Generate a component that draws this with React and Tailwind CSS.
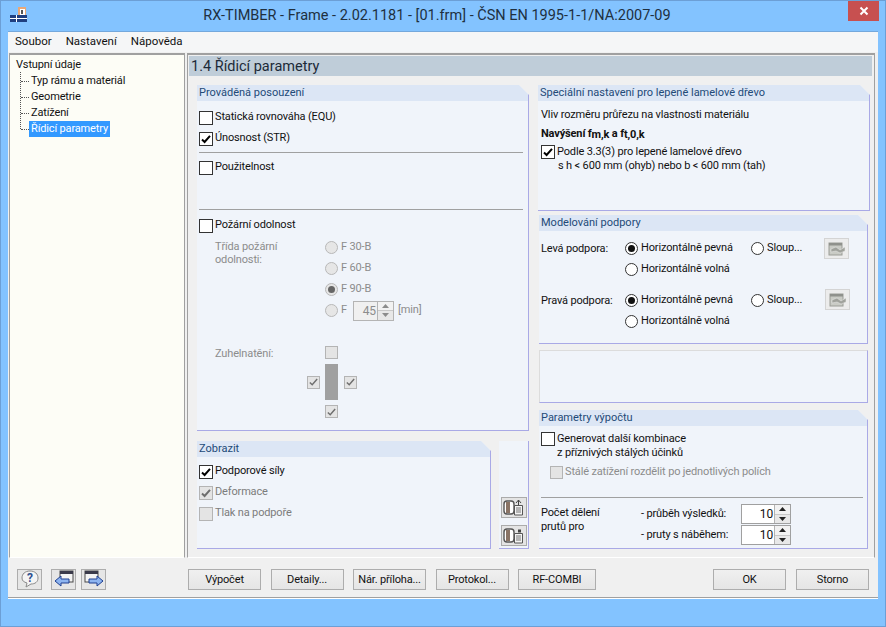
import React from 'react';

function Check({ checked, disabled, small }) {
  const size = small ? 'w-[13px] h-[13px]' : 'w-[14px] h-[14px]';
  const tone = disabled ? 'border-[#b4b4b4] bg-[#e4e4e4]' : 'border-[#333333] bg-white';
  return (
    <span className={`${size} ${tone} shrink-0 border flex items-center justify-center`}>
      {checked && (
        <svg width="12" height="12" viewBox="0 0 12 12">
          <path
            d="M2 6.5 L4.6 9 L10 2.8"
            fill="none"
            stroke={disabled ? '#6f6f6f' : '#000000'}
            strokeWidth={small ? 1.6 : 2}
          />
        </svg>
      )}
    </span>
  );
}

function Radio({ selected, disabled }) {
  const tone = disabled ? 'border-[#b8b8b8] bg-[#e6e6e6]' : 'border-[#333333] bg-white';
  return (
    <span className={`w-[13px] h-[13px] shrink-0 rounded-full border ${tone} flex items-center justify-center`}>
      {selected && (
        <span className={`w-[7px] h-[7px] rounded-full ${disabled ? 'bg-[#666666]' : 'bg-[#111111]'}`}></span>
      )}
    </span>
  );
}

function Group({ title, className, titleClass = '', children }) {
  return (
    <div className={`${className} flex flex-col bg-[#f0f4fa] border-r border-b border-[#a9a9e6] [clip-path:polygon(0_0,calc(100%-10px)_0,100%_10px,100%_100%,0_100%)]`}>
      <div className={`h-[16px] shrink-0 bg-[#dce6f5] pl-[2px] text-[11px] leading-[16px] tracking-normal text-[#234a78] ${titleClass}`}>{title}</div>
      {children}
    </div>
  );
}

function CheckRow({ label, checked, disabled }) {
  return (
    <div className="h-[21px] flex items-center gap-[2px]">
      <Check checked={checked} disabled={disabled} />
      <span className={disabled ? 'text-[#7c7c7c]' : ''}>{label}</span>
    </div>
  );
}

function RadioRow({ label, selected, disabled, className = '' }) {
  return (
    <div className={`h-[21px] flex items-center gap-[3px] ${className}`}>
      <Radio selected={selected} disabled={disabled} />
      <span className={disabled ? 'text-[#8c8c8c]' : ''}>{label}</span>
    </div>
  );
}

function Spinner({ value, disabled, className = '' }) {
  return (
    <div className={`${className} flex border ${disabled ? 'border-[#b4b4b4] bg-[#f0f0f0] text-[#8c8c8c]' : 'border-[#a0a0a0] bg-white'}`}>
      <span className="flex-1 text-right pr-[1px] leading-[18px] text-[12px]">{value}</span>
      <span className="w-[16px] flex flex-col border-l border-[#b4b4b4]">
        <span className="flex-1 flex items-center justify-center border-b border-[#c8c8c8] bg-[#f2f2f2]">
          <svg width="7" height="4" viewBox="0 0 7 4"><path d="M3.5 0 L7 4 L0 4 Z" fill={disabled ? '#8c8c8c' : '#222222'} /></svg>
        </span>
        <span className="flex-1 flex items-center justify-center bg-[#e8e8e8]">
          <svg width="7" height="4" viewBox="0 0 7 4"><path d="M0 0 L7 0 L3.5 4 Z" fill={disabled ? '#8c8c8c' : '#222222'} /></svg>
        </span>
      </span>
    </div>
  );
}

// greyed-out support editor button
function SupportButton({ className = '' }) {
  return (
    <span className={`${className} w-[25px] h-[21px] border border-[#d4d4d4] bg-[#ececec] flex items-center justify-center`}>
      <svg width="18" height="14" viewBox="0 0 18 14">
        <rect x="1" y="1" width="13" height="12" fill="#c9cbc5" stroke="#9a9c96" />
        <rect x="1" y="1" width="13" height="2.5" fill="#8f918c" />
        <path d="M3 7 L8 5 L12 8 L17 5 L17 9 L12 11 L8 9 L3 10 Z" fill="#a0a29c" stroke="#e8e8e8" strokeWidth="0.5" />
      </svg>
    </span>
  );
}

// copy / paste settings buttons next to the display group
function ClipboardButton({ star }) {
  return (
    <span className="w-[26px] h-[21px] border border-[#ababab] bg-[#e4e4e4] flex items-center justify-center">
      <svg width="22" height="17" viewBox="0 0 22 17">
        <rect x="1" y="2" width="10" height="13" rx="3" fill="#ffffff" stroke="#555555" strokeWidth="1.4" />
        <rect x="3" y="3" width="4" height="11" fill="#8a7466" />
        <path d="M11.5 6.5 H19.5 V16 H11.5 Z" fill="#f4f4f4" stroke="#555555" />
        <path d="M13 9 H18 M13 11 H18 M13 13 H18" stroke="#777777" />
        {star
          ? <rect x="15" y="2.5" width="3" height="3" fill="#444444" />
          : <path d="M13 4 L15.5 1 L18 4 M15.5 1 V6" fill="none" stroke="#444444" />}
      </svg>
    </span>
  );
}

function ToolButton({ children }) {
  return (
    <span className="w-[25px] h-[21px] border border-[#adadad] bg-[#e6e6e6] flex items-center justify-center">
      {children}
    </span>
  );
}

function ActionButton({ label, className = 'w-[73px]' }) {
  return (
    <button className={`${className} h-[21px] border border-[#adadad] bg-gradient-to-b from-[#f0f0f0] to-[#e5e5e5] text-center leading-[19px] whitespace-nowrap`}>
      {label}
    </button>
  );
}

function WindowArrow({ flip }) {
  return (
    <svg width="20" height="18" viewBox="0 0 20 18" className={flip ? '-scale-x-100' : ''}>
      <rect x="6" y="1" width="13" height="11" fill="#f4f4f4" stroke="#4a4a4a" />
      <rect x="6" y="1" width="13" height="3" fill="#3a3a4a" />
      <path d="M1 11 L7 6 V9 H15 V13 H7 V16 Z" fill="#8db4f0" stroke="#1f3f90" />
    </svg>
  );
}

const treeItems = ['Typ rámu a materiál', 'Geometrie', 'Zatížení', 'Řídicí parametry'];

export default function App() {
  return (
    <div className="w-[886px] h-[627px] flex flex-col overflow-hidden bg-[#83c3ff] border border-[#6c9fd6] font-['Roboto',Arial,sans-serif] text-[11px] tracking-[-0.15px] text-[#111111]">
      {/* title bar */}
      <div className="h-[30px] shrink-0 relative flex items-center justify-center pr-[12px] text-[14.5px] tracking-normal text-[#20303f]">
        <svg width="18" height="16" viewBox="0 0 18 16" className="absolute left-[9px] top-[6px]">
          <rect x="8" y="0" width="8" height="9" fill="#e8a878" />
          <rect x="10" y="2" width="5" height="6" fill="#ffffff" />
          <rect x="11" y="3" width="2" height="4" fill="#555555" />
          <rect x="0" y="8" width="17" height="7" fill="#1f3f80" />
          <rect x="0" y="11" width="17" height="1" fill="#ffffff" />
          <rect x="6" y="8" width="1" height="7" fill="#ffffff" />
        </svg>
        <span>RX-TIMBER - Frame - 2.02.1181 - [01.frm] - ČSN EN 1995-1-1/NA:2007-09</span>
        <span className="absolute right-[6px] top-0 w-[31px] h-[20px] bg-[#c75050] flex items-center justify-center">
          <svg width="10" height="10" viewBox="0 0 10 10">
            <path d="M1.5 1.5 L8.5 8.5 M8.5 1.5 L1.5 8.5" stroke="#ffffff" strokeWidth="2" />
          </svg>
        </span>
      </div>

      <div className="mx-[7px] h-[566px] shrink-0 flex flex-col bg-[#f0f0f0] border-t border-[#74a8dc]">
        {/* menu */}
        <div className="h-[20px] shrink-0 bg-[#f5f6f7] flex items-center gap-[14px] pl-[7px] text-[11.5px] tracking-normal">
          <span>Soubor</span>
          <span>Nastavení</span>
          <span>Nápověda</span>
        </div>

        <div className="h-[505px] shrink-0 mt-[1px] flex gap-[2px] pl-[1px]">
          {/* navigation tree */}
          <div className="w-[176px] bg-[#fdfdf6] border-t-2 border-l border-r border-b border-t-[#a0a0a0] border-l-[#a0a0a0] border-r-[#a0a0a0] border-b-white pl-[6px] pt-[2px]">
            <div className="h-[16px] leading-[16px]">Vstupní údaje</div>
            <div className="relative">
              <span className="absolute left-[4px] -top-[1px] bottom-[8px] border-l border-dotted border-[#555555]"></span>
              {treeItems.map((item) => (
                <div key={item} className="h-[16px] flex items-center pl-[5px]">
                  <span className="w-[8px] border-t border-dotted border-[#555555]"></span>
                  <span className={`leading-[16px] px-[2px] ${item === 'Řídicí parametry' ? 'bg-[#3399ff] text-white' : ''}`}>{item}</span>
                </div>
              ))}
            </div>
          </div>

          {/* main panel */}
          <div className="w-[688px] border-t-2 border-l border-r border-b border-t-[#a0a0a0] border-l-[#a0a0a0] border-r-[#a0a0a0] border-b-white pt-[1px] pl-[1px]">
            <div className="w-[683px] h-[20px] bg-[#bfcdd9] pl-[2px] text-[14.5px] tracking-normal leading-[22px] text-[#1c2a38]">1.4 Řídicí parametry</div>

            <div className="mt-[9px] ml-[8px] flex gap-[9px]">
              {/* left column */}
              <div className="w-[332px] flex flex-col">
                <Group title="Prováděná posouzení" titleClass="tracking-[0.5px]" className="h-[346px]">
                  <div className="pl-[2px] pt-[6px]">
                    <CheckRow label="Statická rovnováha (EQU)" />
                    <CheckRow label="Únosnost (STR)" checked />
                    <div className="mt-[3px] mr-[5px] border-t border-[#a0a0a0]"></div>
                    <div className="mt-[4px]"><CheckRow label="Použitelnost" /></div>
                    <div className="mt-[31px] mr-[5px] border-t border-[#a0a0a0]"></div>
                    <div className="mt-[5px]"><CheckRow label="Požární odolnost" /></div>

                    <div className="mt-[1px] flex text-[#8c8c8c]">
                      <div className="w-[126px] pl-[16px] pt-[3px] leading-[13px]">Třída požární<br />odolnosti:</div>
                      <div>
                        <RadioRow label="F 30-B" disabled />
                        <RadioRow label="F 60-B" disabled />
                        <RadioRow label="F 90-B" selected disabled />
                        <div className="flex items-center">
                          <RadioRow label="F" disabled />
                          <Spinner value="45" disabled className="ml-[6px] w-[41px] h-[20px]" />
                          <span className="ml-[4px]">[min]</span>
                        </div>
                      </div>
                    </div>

                    <div className="mt-[25px] flex text-[#8c8c8c]">
                      <div className="w-[108px] pl-[16px]">Zuhelnatění:</div>
                      <div className="grid grid-cols-[12px_13px_12px] gap-x-[6px] gap-y-[5px] items-center">
                        <span></span>
                        <Check small disabled />
                        <span></span>
                        <Check small checked disabled />
                        <span className="h-[36px] bg-[#a0a0a0]"></span>
                        <Check small checked disabled />
                        <span></span>
                        <Check small checked disabled />
                        <span></span>
                      </div>
                    </div>
                  </div>
                </Group>

                <div className="mt-[10px] h-[108px] flex gap-[8px]">
                  <Group title="Zobrazit" className="w-[294px]">
                    <div className="pl-[2px] pt-[4px]">
                      <CheckRow label="Podporové síly" checked />
                      <CheckRow label="Deformace" checked disabled />
                      <CheckRow label="Tlak na podpoře" disabled />
                    </div>
                  </Group>
                  <div className="w-[30px] bg-[#f0f4fa] border-r border-b border-[#a9a9e6] flex flex-col items-center justify-end gap-[7px] pb-[2px]">
                    <ClipboardButton />
                    <ClipboardButton star />
                  </div>
                </div>
              </div>

              {/* right column */}
              <div className="w-[332px] flex flex-col">
                <Group title="Speciální nastavení pro lepené lamelové dřevo" className="h-[126px]">
                  <div className="pl-[3px]">
                    <div className="mt-[6px] leading-[16px]">Vliv rozměru průřezu na vlastnosti materiálu</div>
                    <div className="mt-[3px] leading-[16px] font-bold">
                      Navýšení f<span className="text-[11px] relative top-[1px]">m,k</span> a f<span className="text-[11px] relative top-[1px]">t,0,k</span>
                    </div>
                    <div className="mt-[3px] flex gap-[2px]">
                      <Check checked />
                      <div className="leading-[14px]">
                        Podle 3.3(3) pro lepené lamelové dřevo<br />
                        <span className="ml-[1px]">s h &lt; 600 mm (ohyb) nebo b &lt; 600 mm (tah)</span>
                      </div>
                    </div>
                  </div>
                </Group>

                <Group title="Modelování podpory" className="h-[129px] mt-[4px] ml-[1px] mr-[2px]">
                  <div className="pl-[2px] pt-[4px] pr-[17px]">
                    <div className="h-[50px] mt-[3px] flex">
                      <span className="w-[84px] pt-[3px]">Levá podpora:</span>
                      <div className="w-[126px]">
                        <RadioRow label="Horizontálně pevná" selected />
                        <RadioRow label="Horizontálně volná" />
                      </div>
                      <RadioRow label="Sloup..." />
                      <SupportButton className="ml-auto mr-[1px]" />
                    </div>
                    <div className="h-[50px] mt-[2px] flex">
                      <span className="w-[84px] pt-[3px]">Pravá podpora:</span>
                      <div className="w-[126px]">
                        <RadioRow label="Horizontálně pevná" selected />
                        <RadioRow label="Horizontálně volná" />
                      </div>
                      <RadioRow label="Sloup..." />
                      <SupportButton className="ml-auto -mt-[1px]" />
                    </div>
                  </div>
                </Group>

                <div className="h-[53px] mt-[6px] ml-[1px] mr-[2px] bg-[#f0f4fa] border-r border-b border-t border-l border-[#dcdcdc] border-b-[#a9a9e6] border-r-[#a9a9e6]"></div>

                <Group title="Parametry výpočtu" className="h-[139px] mt-[7px] ml-[1px] mr-[2px]">
                  <div className="pl-[2px] pt-[6px]">
                    <div className="flex gap-[2px]">
                      <Check />
                      <div className="leading-[14px]">Generovat další kombinace<br />z příznivých stálých účinků</div>
                    </div>
                    <div className="ml-[9px] mt-[2px] h-[21px] flex items-center gap-[2px] text-[#8c8c8c]">
                      <Check disabled small />
                      <span>Stálé zatížení rozdělit po jednotlivých polích</span>
                    </div>
                    <div className="mt-[14px] mr-[4px] border-t border-[#a0a0a0]"></div>
                    <div className="mt-[6px] flex">
                      <div className="w-[100px] pt-[2px] leading-[14px]">Počet dělení<br />prutů pro</div>
                      <div className="flex flex-col gap-[1px]">
                        <div className="flex items-center">
                          <span className="w-[100px]">- průběh výsledků:</span>
                          <Spinner value="10" className="w-[50px] h-[20px]" />
                        </div>
                        <div className="flex items-center">
                          <span className="w-[100px]">- pruty s náběhem:</span>
                          <Spinner value="10" className="w-[50px] h-[20px]" />
                        </div>
                      </div>
                    </div>
                  </div>
                </Group>
              </div>
            </div>
          </div>
        </div>

        {/* button strip */}
        <div className="h-[39px] shrink-0 flex items-center pl-[9px] pr-[9px] pt-[3px]">
          <ToolButton>
            <svg width="20" height="18" viewBox="0 0 20 18">
              <path d="M10 1 C15 1 18 4 18 8 C18 12 15 14 11 14 L6 17 L7 13 C4 12 2 11 2 8 C2 4 5 1 10 1 Z" fill="#f4f4f4" stroke="#8a8a8a" />
              <text x="10" y="12" textAnchor="middle" fontSize="12" fontWeight="700" fill="#2f4f90">?</text>
            </svg>
          </ToolButton>
          <span className="ml-[9px]"><ToolButton><WindowArrow /></ToolButton></span>
          <span className="ml-[5px]"><ToolButton><WindowArrow flip /></ToolButton></span>
          <span className="ml-[82px] flex gap-[9.5px]">
            <ActionButton label="Výpočet" />
            <ActionButton label="Detaily..." />
            <ActionButton label="Nár. příloha..." />
            <ActionButton label="Protokol..." />
            <ActionButton label="RF-COMBI" className="w-[78px]" />
          </span>
          <span className="ml-auto flex gap-[10px]">
            <ActionButton label="OK" />
            <ActionButton label="Storno" />
          </span>
        </div>

        {/* status bar */}
        <div className="flex-1 border-t border-[#a0a0a0] border-b border-b-white"></div>
      </div>
    </div>
  );
}
